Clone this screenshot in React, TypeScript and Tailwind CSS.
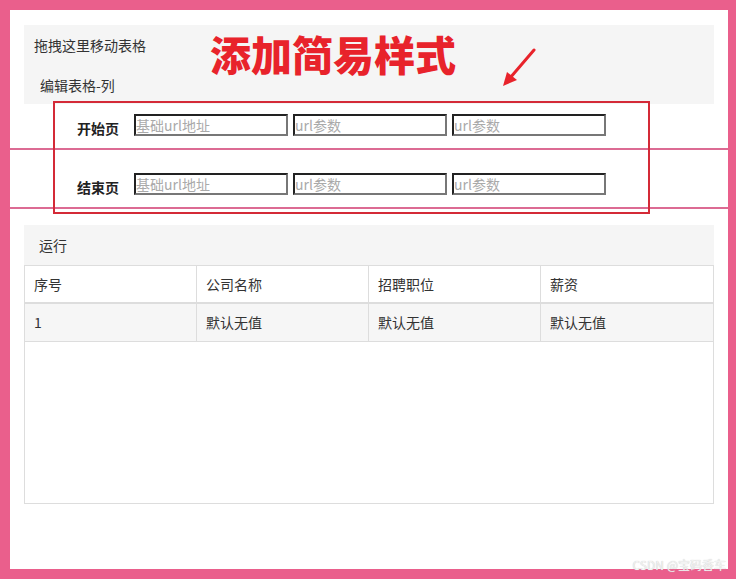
import React from 'react';

const font = { fontFamily: '"Noto Sans CJK SC", "Liberation Sans", sans-serif' };

const cols = ['序号', '公司名称', '招聘职位', '薪资'];
const row = ['1', '默认无值', '默认无值', '默认无值'];

function UrlRow({ label, pt }: { label: string; pt: string }) {
  return (
    <div className={`flex items-end pb-[12px] border-b-2 border-[#dc6b93] ${pt}`}>
      <span className="ml-[67px] w-[57px] text-[14px] font-bold leading-none text-[#222] mb-[1px]">{label}</span>
      <div className="flex gap-[5px]">
        <input
          placeholder="基础url地址"
          className="w-[154px] h-[22px] border-2 border-t-[#222] border-l-[#222] border-r-[#777] border-b-[#777] px-0 text-[14px] placeholder:text-[#aaa] outline-none"
        />
        <input
          placeholder="url参数"
          className="w-[154px] h-[22px] border-2 border-t-[#222] border-l-[#222] border-r-[#777] border-b-[#777] px-0 text-[14px] placeholder:text-[#aaa] outline-none"
        />
        <input
          placeholder="url参数"
          className="w-[154px] h-[22px] border-2 border-t-[#222] border-l-[#222] border-r-[#777] border-b-[#777] px-0 text-[14px] placeholder:text-[#aaa] outline-none"
        />
      </div>
    </div>
  );
}

export default function App() {
  return (
    <div className="w-[736px] h-[579px] bg-[#ea5f8c] pt-[10px] pl-[10px] pr-[8px] pb-[10px]" style={font}>
      <div className="relative w-full h-full bg-white flex flex-col text-[#333]">
        {/* drag header */}
        <div className="mx-[14px] mt-[15px] h-[79px] bg-[#f5f5f5] flex flex-col text-[14px]">
          <div className="pl-[10px] pt-[10px] h-[30px] leading-[20px]">拖拽这里移动表格</div>
          <div className="pl-[16px] pt-[20px] leading-[20px]">编辑表格-列</div>
        </div>

        {/* url rows */}
        <UrlRow label="开始页" pt="pt-[10px]" />
        <UrlRow label="结束页" pt="pt-[23px]" />

        {/* run panel */}
        <div className="mx-[14px] mt-[16px] h-[279px] flex flex-col">
          <div className="h-[40px] bg-[#f5f5f5] flex items-center pl-[15px] text-[14px]">运行</div>
          <div className="flex-1 border border-[#ddd]">
            <div className="grid grid-cols-4 h-[38px] border-b-2 border-[#ddd] text-[14px]">
              {cols.map((c, i) => (
                <div key={c} className={`flex items-center pl-[9px] ${i < 3 ? 'border-r border-[#ddd]' : ''}`}>
                  {c}
                </div>
              ))}
            </div>
            <div className="grid grid-cols-4 h-[38px] bg-[#f6f6f6] border-b border-[#ddd] text-[14px]">
              {row.map((c, i) => (
                <div key={i} className={`flex items-center pl-[9px] ${i < 3 ? 'border-r border-[#ddd]' : ''}`}>
                  {c}
                </div>
              ))}
            </div>
          </div>
        </div>

        {/* annotation overlays */}
        <div className="absolute left-[200px] top-[23px] text-[41px] leading-none font-black text-[#e8232b]">
          添加简易样式
        </div>
        <svg className="absolute left-[488px] top-[36px]" width="40" height="44" viewBox="0 0 40 44">
          <line x1="36" y1="4" x2="12" y2="32" stroke="#e8232b" strokeWidth="3" strokeLinecap="round" />
          <polygon points="5,40 9,26 19,34" fill="#e8232b" />
        </svg>
        <div className="absolute left-[43px] top-[91px] w-[597px] h-[113px] border-2 border-[#d42a37]" />
        <div className="absolute right-[2px] bottom-[-5px] text-[12px] text-[#f2f2f2] [text-shadow:0_0_1px_#bbb]">
          CSDN @宝码香车
        </div>
      </div>
    </div>
  );
}
